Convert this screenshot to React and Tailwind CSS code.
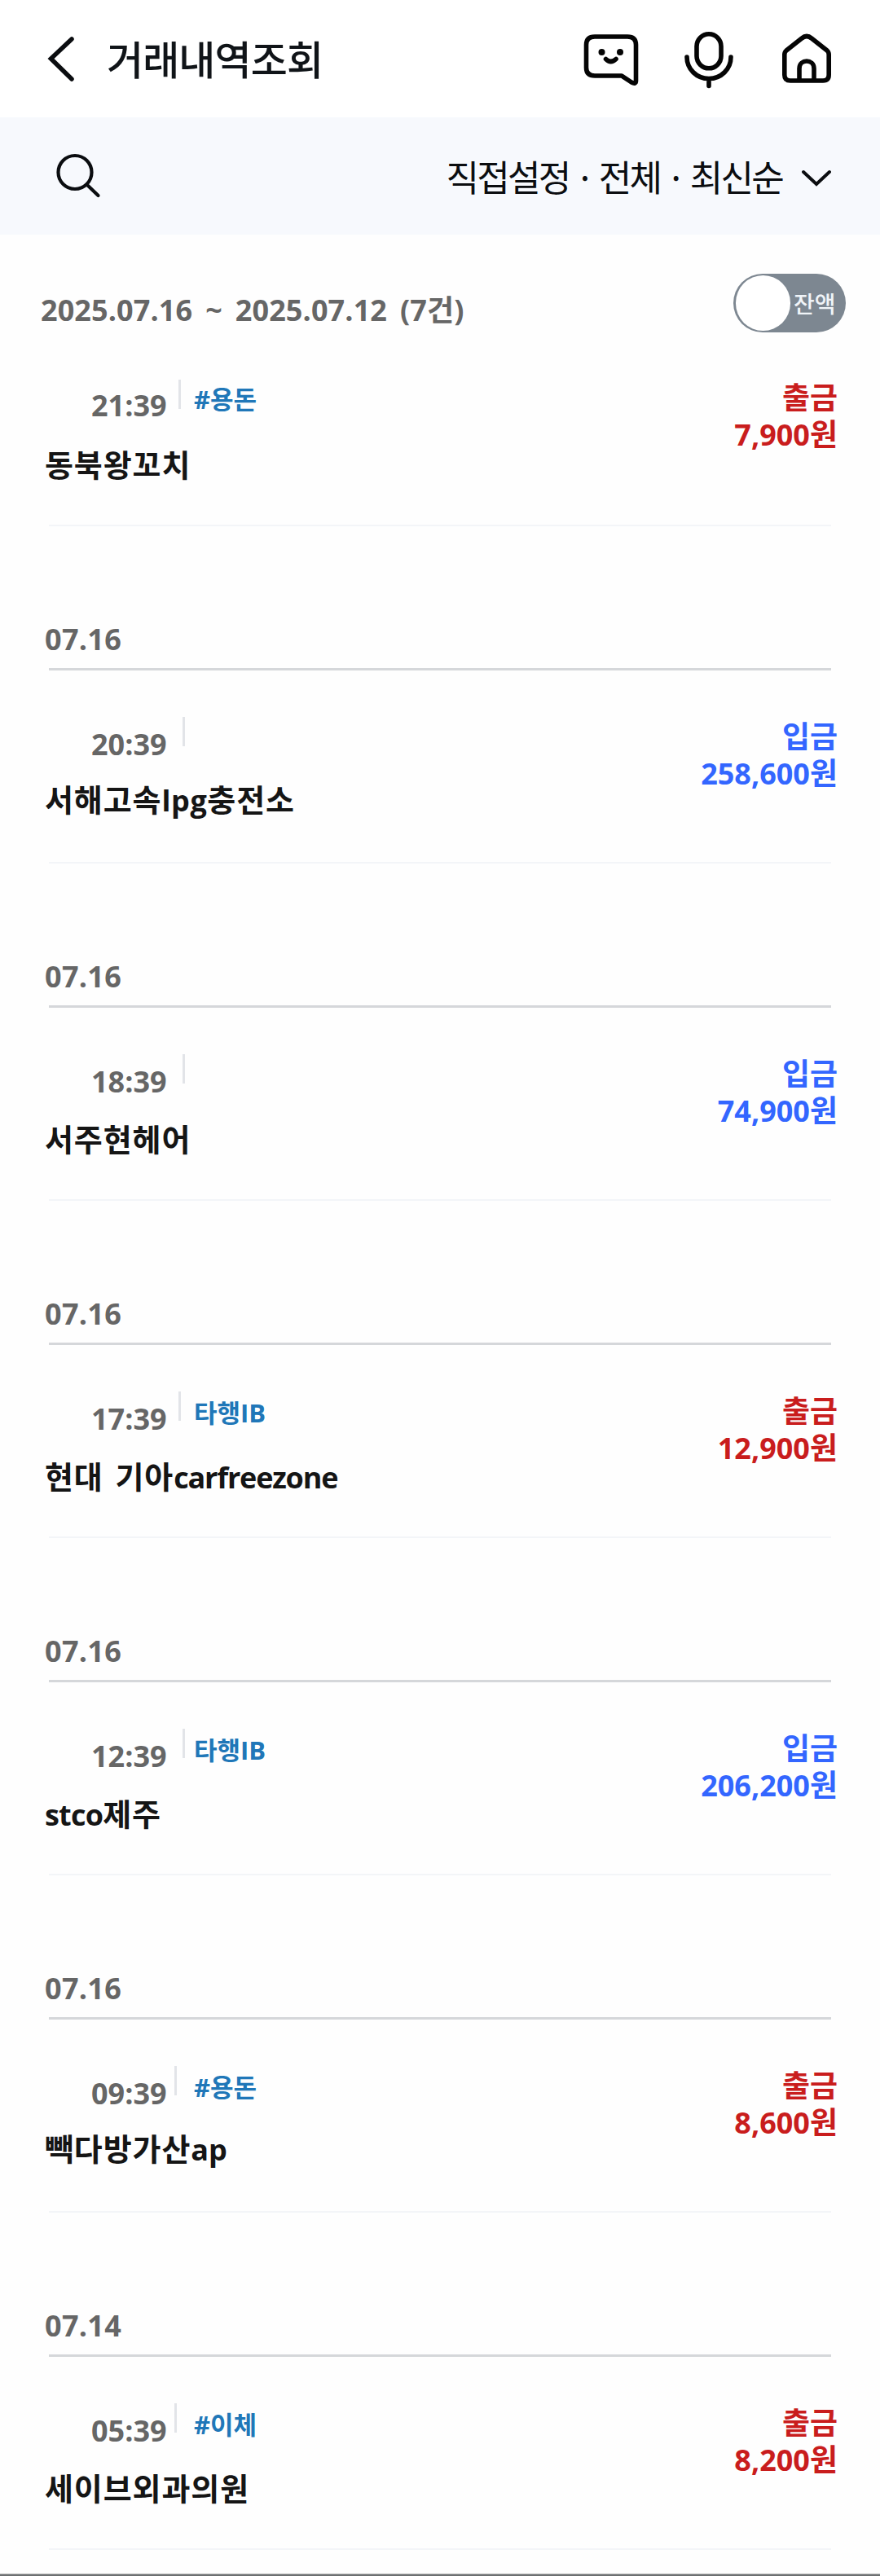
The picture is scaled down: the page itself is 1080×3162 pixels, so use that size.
import React from 'react';

const rows = [
  { time: '21:39', tag: '#용돈', name: '동북왕꼬치', type: '출금', amount: '7,900', bar: 'ml-[219px]', first: true },
  { date: '07.16', time: '20:39', name: '서해고속lpg충전소', latin: 'tracking-[0.6px]', type: '입금', amount: '258,600', bar: 'ml-[224px]', up: true },
  { date: '07.16', time: '18:39', name: '서주현헤어', type: '입금', amount: '74,900', bar: 'ml-[224px]' },
  { date: '07.16', time: '17:39', tag: '타행IB', name: '현대 기아carfreezone', latin: 'tracking-[-1.2px]', type: '출금', amount: '12,900', bar: 'ml-[219px]' },
  { date: '07.16', time: '12:39', tag: '타행IB', name: 'stco제주', latin: 'tracking-[-0.8px]', type: '입금', amount: '206,200', bar: 'ml-[224px]' },
  { date: '07.16', time: '09:39', tag: '#용돈', name: '빽다방가산ap', latin: 'tracking-[0px]', type: '출금', amount: '8,600', bar: 'ml-[214px]', up: true },
  { date: '07.14', time: '05:39', tag: '#이체', name: '세이브외과의원', type: '출금', amount: '8,200', bar: 'ml-[214px]' },
];

// Latin runs are set slightly smaller than the Hangul around them.
function Name({ text, latin }) {
  return text.split(/([a-z]+)/).filter(Boolean).map((part, i) =>
    /[a-z]/.test(part)
      ? <span key={i} className={'text-[36px] leading-none ' + latin}>{part}</span>
      : <span key={i}>{part}</span>
  );
}

function Row({ r }) {
  const red = r.type === '출금';
  return (
    <section>
      {r.date && (
        <div className="h-[177px] pt-[115px]">
          <div className="ml-[55px] h-[60px] text-[36px] font-bold leading-[50px] tracking-[0.3px] text-[#666666]">{r.date}</div>
          <div className="mx-[60px] h-[3px] bg-[#d5d7da]" />
        </div>
      )}
      <div className="flex h-[237px] justify-between pr-[52px]">
        <div className="flex w-[700px] flex-col">
          <div className="grid h-[110px]">
            <div className={'col-start-1 row-start-1 pl-[112px] text-[36px] font-bold leading-[50px] text-[#666666] ' + (r.first ? 'pt-[65px]' : 'pt-[67px]')}>{r.time}</div>
            <div className={'col-start-1 row-start-1 mt-[58px] h-[36px] w-[3px] bg-[#e2e4e8] ' + r.bar} />
            <div className={'col-start-1 row-start-1 pl-[238px] text-[31px] font-bold leading-[44px] text-[#2077b8] ' + (r.first ? 'pt-[60px]' : 'pt-[62px]')}>{r.tag}</div>
          </div>
          <div className={'pl-[55px] text-[38px] font-bold leading-[52px] tracking-[0.9px] text-[#151515] whitespace-pre [word-spacing:4px] ' + (r.up ? 'pt-[23px]' : 'pt-[26px]')}><Name text={r.name} latin={r.latin} /></div>
        </div>
        <div className={'text-right text-[37px] font-bold leading-[45px] ' + (r.first ? 'pt-[57px] ' : 'pt-[59px] ') + (red ? 'text-[#c91d1d]' : 'text-[#3366ff]')}>
          <div>{r.type}</div>
          <div><span className="text-[36px] leading-none">{r.amount}</span>원</div>
        </div>
      </div>
      <div className="mx-[60px] -mt-px -mb-px h-[2px] bg-[#f3f5f8]" />
    </section>
  );
}

export default function App() {
  return (
    <div className="flex h-[3162px] w-[1080px] flex-col overflow-hidden bg-[#fefefe] font-['Open_Sans','Noto_Sans_CJK_KR',sans-serif]">
      <header className="flex h-[144px] shrink-0 items-center bg-white">
        <svg className="ml-[56px] h-[60px] w-[38px]" viewBox="56 42 38 60" fill="none" stroke="#0b0d10" strokeWidth="5.5" strokeLinecap="round" strokeLinejoin="miter">
          <path d="M88 48 L62.500 72 L88 97" />
        </svg>
        <h1 className="-mt-[2px] ml-[37px] font-['Noto_Sans_CJK_KR',sans-serif] text-[49px] font-medium leading-[60px] tracking-[-0.9px] text-[#101418]">거래내역조회</h1>
        <svg className="ml-auto mr-[56px] h-[80px] w-[312px]" viewBox="712 32 312 80" fill="none" stroke="#050505" strokeWidth="5.6" strokeLinecap="round" strokeLinejoin="round">
          <path d="M730 45 H770 Q780.5 45 780.5 55 V99 Q780.5 104 775 101 L763 93 H730 Q719.5 93 719.5 83 V55 Q719.5 45 730 45 Z" />
          <circle cx="738.5" cy="64" r="4" fill="#050505" stroke="none" />
          <circle cx="761" cy="64" r="4" fill="#050505" stroke="none" />
          <path d="M743.5 72.5 Q749.5 78.500 756 72.5" />
          <rect x="855" y="41.800" width="30" height="42" rx="15" />
          <path d="M843 70 C843 85 855 96.500 870 96.500 C885 96.500 897 85 897 70 M870 98 V105.500" />
          <path d="M962.800 67 Q962.800 64 965 62 L984 47 Q990 42 996 47 L1015 62 Q1017.200 64 1017.200 67 V92 Q1017.200 99 1010 99 H970 Q962.800 99 962.800 92 Z M981 98 V84 C981 72 999 72 999 84 V98" />
        </svg>
      </header>
      <div className="flex h-[144px] shrink-0 items-center bg-[#f7f9fd]">
        <svg className="ml-[64px] h-[64px] w-[64px]" viewBox="64 184 64 64" fill="none" stroke="#0b0d10" strokeWidth="4.2" strokeLinecap="round">
          <circle cx="92" cy="211.5" r="20.5" />
          <path d="M107 227 L120.5 240" />
        </svg>
        <div className="ml-auto font-['Noto_Sans_CJK_KR',sans-serif] text-[44px] font-normal leading-[60px] tracking-[-2.7px] text-[#0b0d10]">직접설정 · 전체 · 최신순</div>
        <svg className="ml-[22px] mr-[58px] mt-[4px] h-[24px] w-[40px]" viewBox="982 206 40 24" fill="none" stroke="#0b0d10" strokeWidth="4" strokeLinecap="round">
          <path d="M986 211 L1002 226 L1018 211" />
        </svg>
      </div>
      <div className="flex h-[120px] shrink-0 items-start justify-between pl-[50px] pr-[42px] pt-[48px]">
        <div className="pt-[20px] text-[36px] font-bold leading-[50px] tracking-[0.1px] text-[#666666] whitespace-pre [word-spacing:6.5px]">2025.07.16 ~ 2025.07.12 (7건)</div>
        <div className="flex h-[72px] w-[138px] items-center rounded-full bg-[#7d8791] pl-[3px]">
          <div className="h-[68px] w-[67px] rounded-full bg-white" />
          <div className="ml-[4px] font-['Noto_Sans_CJK_KR',sans-serif] text-[28px] font-medium leading-[40px] text-[#f0f4f8]">잔액</div>
        </div>
      </div>
      {rows.map((r, i) => <Row key={i} r={r} />)}
      <div className="mt-auto h-[3px] shrink-0 border-t border-[#b5b5b5] bg-[#6e7072]" />
    </div>
  );
}
